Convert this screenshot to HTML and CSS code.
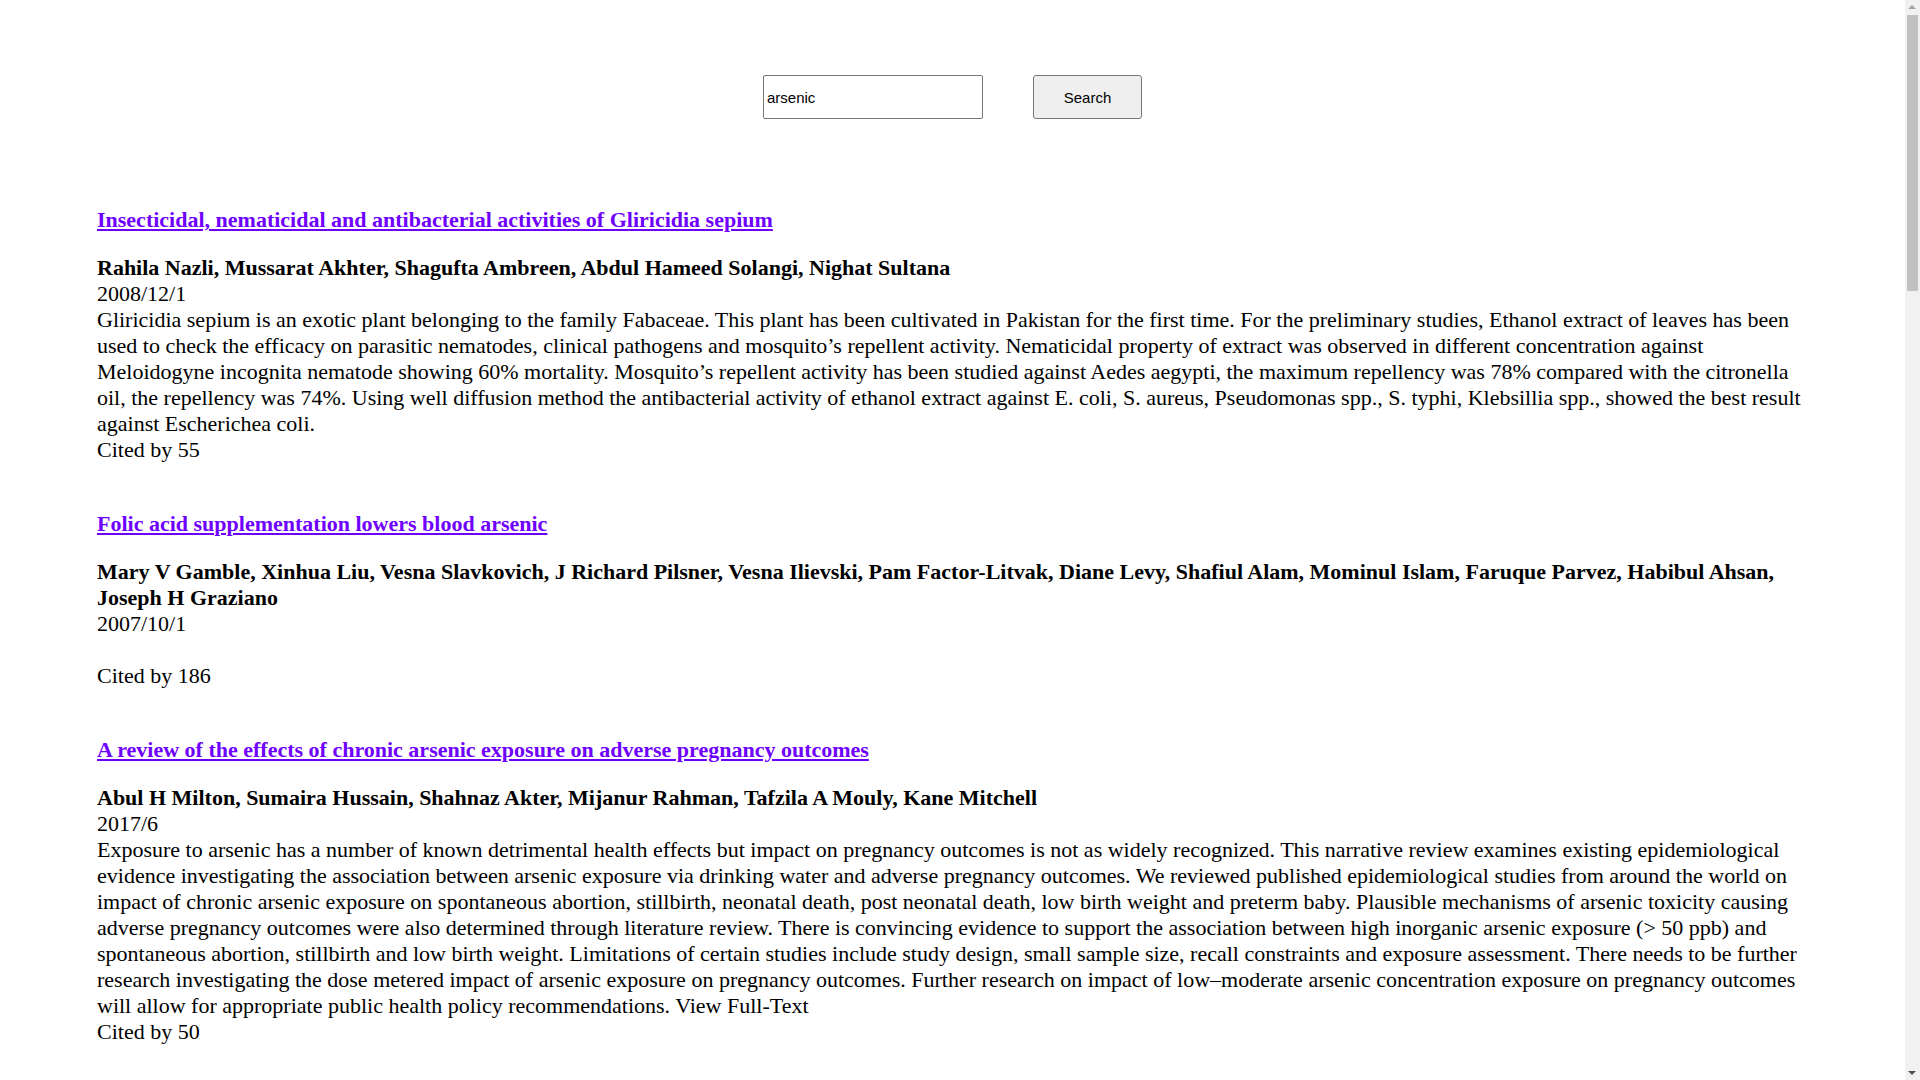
FILE: index.html
```html
<!DOCTYPE html>
<html lang="en">
<head>
<meta charset="utf-8">
<title>Search results: arsenic</title>
<link rel="stylesheet" href="styles.css">
</head>
<body>
<div class="page">
  <form class="search" action="#">
    <input class="search-input" type="text" value="arsenic">
    <button class="search-btn" type="button">Search</button>
  </form>

  <main class="results">
    <article class="entry">
      <h3 class="entry-title"><a href="#">Insecticidal, nematicidal and antibacterial activities of Gliricidia sepium</a></h3>
      <div class="authors">Rahila Nazli, Mussarat Akhter, Shagufta Ambreen, Abdul Hameed Solangi, Nighat Sultana</div>
      <div class="date">2008/12/1</div>
      <div class="abstract">Gliricidia sepium is an exotic plant belonging to the family Fabaceae. This plant has been cultivated in Pakistan for the first time. For the preliminary studies, Ethanol extract of leaves has been used to check the efficacy on parasitic nematodes, clinical pathogens and mosquito’s repellent activity. Nematicidal property of extract was observed in different concentration against Meloidogyne incognita nematode showing 60% mortality. Mosquito’s repellent activity has been studied against Aedes aegypti, the maximum repellency was 78% compared with the citronella oil, the repellency was 74%. Using well diffusion method the antibacterial activity of ethanol extract against E. coli, S. aureus, Pseudomonas spp., S. typhi, Klebsillia spp., showed the best result against Escherichea coli.</div>
      <div class="cited">Cited by 55</div>
    </article>

    <article class="entry">
      <h3 class="entry-title"><a href="#">Folic acid supplementation lowers blood arsenic</a></h3>
      <div class="authors">Mary V Gamble, Xinhua Liu, Vesna Slavkovich, J Richard Pilsner, Vesna Ilievski, Pam Factor-Litvak, Diane Levy, Shafiul Alam, Mominul Islam, Faruque Parvez, Habibul Ahsan, Joseph H Graziano</div>
      <div class="date">2007/10/1</div>
      <div class="abstract"></div>
      <div class="cited">Cited by 186</div>
    </article>

    <article class="entry">
      <h3 class="entry-title"><a href="#">A review of the effects of chronic arsenic exposure on adverse pregnancy outcomes</a></h3>
      <div class="authors">Abul H Milton, Sumaira Hussain, Shahnaz Akter, Mijanur Rahman, Tafzila A Mouly, Kane Mitchell</div>
      <div class="date">2017/6</div>
      <div class="abstract">Exposure to arsenic has a number of known detrimental health effects but impact on pregnancy outcomes is not as widely recognized. This narrative review examines existing epidemiological evidence investigating the association between arsenic exposure via drinking water and adverse pregnancy outcomes. We reviewed published epidemiological studies from around the world on impact of chronic arsenic exposure on spontaneous abortion, stillbirth, neonatal death, post neonatal death, low birth weight and preterm baby. Plausible mechanisms of arsenic toxicity causing adverse pregnancy outcomes were also determined through literature review. There is convincing evidence to support the association between high inorganic arsenic exposure (&gt; 50 ppb) and spontaneous abortion, stillbirth and low birth weight. Limitations of certain studies include study design, small sample size, recall constraints and exposure assessment. There needs to be further research investigating the dose metered impact of arsenic exposure on pregnancy outcomes. Further research on impact of low–moderate arsenic concentration exposure on pregnancy outcomes will allow for appropriate public health policy recommendations. View Full-Text</div>
      <div class="cited">Cited by 50</div>
    </article>
  </main>
</div>

<div class="scrollbar" aria-hidden="true">
  <span class="arrow arrow-up"></span>
  <span class="thumb"></span>
  <span class="arrow arrow-down"></span>
</div>
</body>
</html>
```

FILE: styles.css
```css
html, body {
  margin: 0;
  padding: 0;
  background: #fff;
}

body {
  font-family: "Liberation Serif", "Times New Roman", serif;
  font-size: 22px;
  line-height: 26px;
  color: #000;
}

.page {
  margin-right: 15px;
}

.search {
  display: flex;
  justify-content: center;
  align-items: center;
  gap: 50px;
  padding-top: 75px;
  margin: 0;
}

.search-input {
  box-sizing: border-box;
  width: 220px;
  height: 44px;
  margin: 0;
  padding: 0 3px;
  border: 1px solid #767676;
  border-radius: 2px;
  background: #fff;
  color: #000;
  font-family: "Liberation Sans", Arial, sans-serif;
  font-size: 15px;
  outline: none;
}

.search-btn {
  box-sizing: border-box;
  width: 109px;
  height: 44px;
  margin: 0;
  padding: 0;
  border: 1px solid #767676;
  border-radius: 3px;
  background: #efefef;
  color: #000;
  font-family: "Liberation Sans", Arial, sans-serif;
  font-size: 15px;
}

.results {
  padding: 0 97px;
  margin-top: 88px;
}

.entry {
  margin-bottom: 48px;
}

.entry-title {
  margin: 0 0 22px;
  font-size: 22px;
  line-height: 26px;
  font-weight: bold;
}

.entry-title a {
  color: #6f00ff;
  text-decoration: underline;
}

.authors {
  font-weight: bold;
}

.abstract {
  min-height: 26px;
}

/* Simulated browser scrollbar (overlays the right edge of the viewport) */
.scrollbar {
  position: fixed;
  top: 0;
  right: 0;
  width: 15px;
  height: 100vh;
  background: #f1f1f1;
}

.thumb {
  position: absolute;
  top: 15px;
  left: 2px;
  width: 11px;
  height: 276px;
  background: #c1c1c1;
}

.arrow {
  position: absolute;
  left: 3px;
  width: 0;
  height: 0;
  border-left: 4.5px solid transparent;
  border-right: 4.5px solid transparent;
}

.arrow-up {
  top: 5px;
  border-bottom: 4.5px solid #a3a3a3;
}

.arrow-down {
  bottom: 5px;
  border-top: 4.5px solid #505050;
}
```
